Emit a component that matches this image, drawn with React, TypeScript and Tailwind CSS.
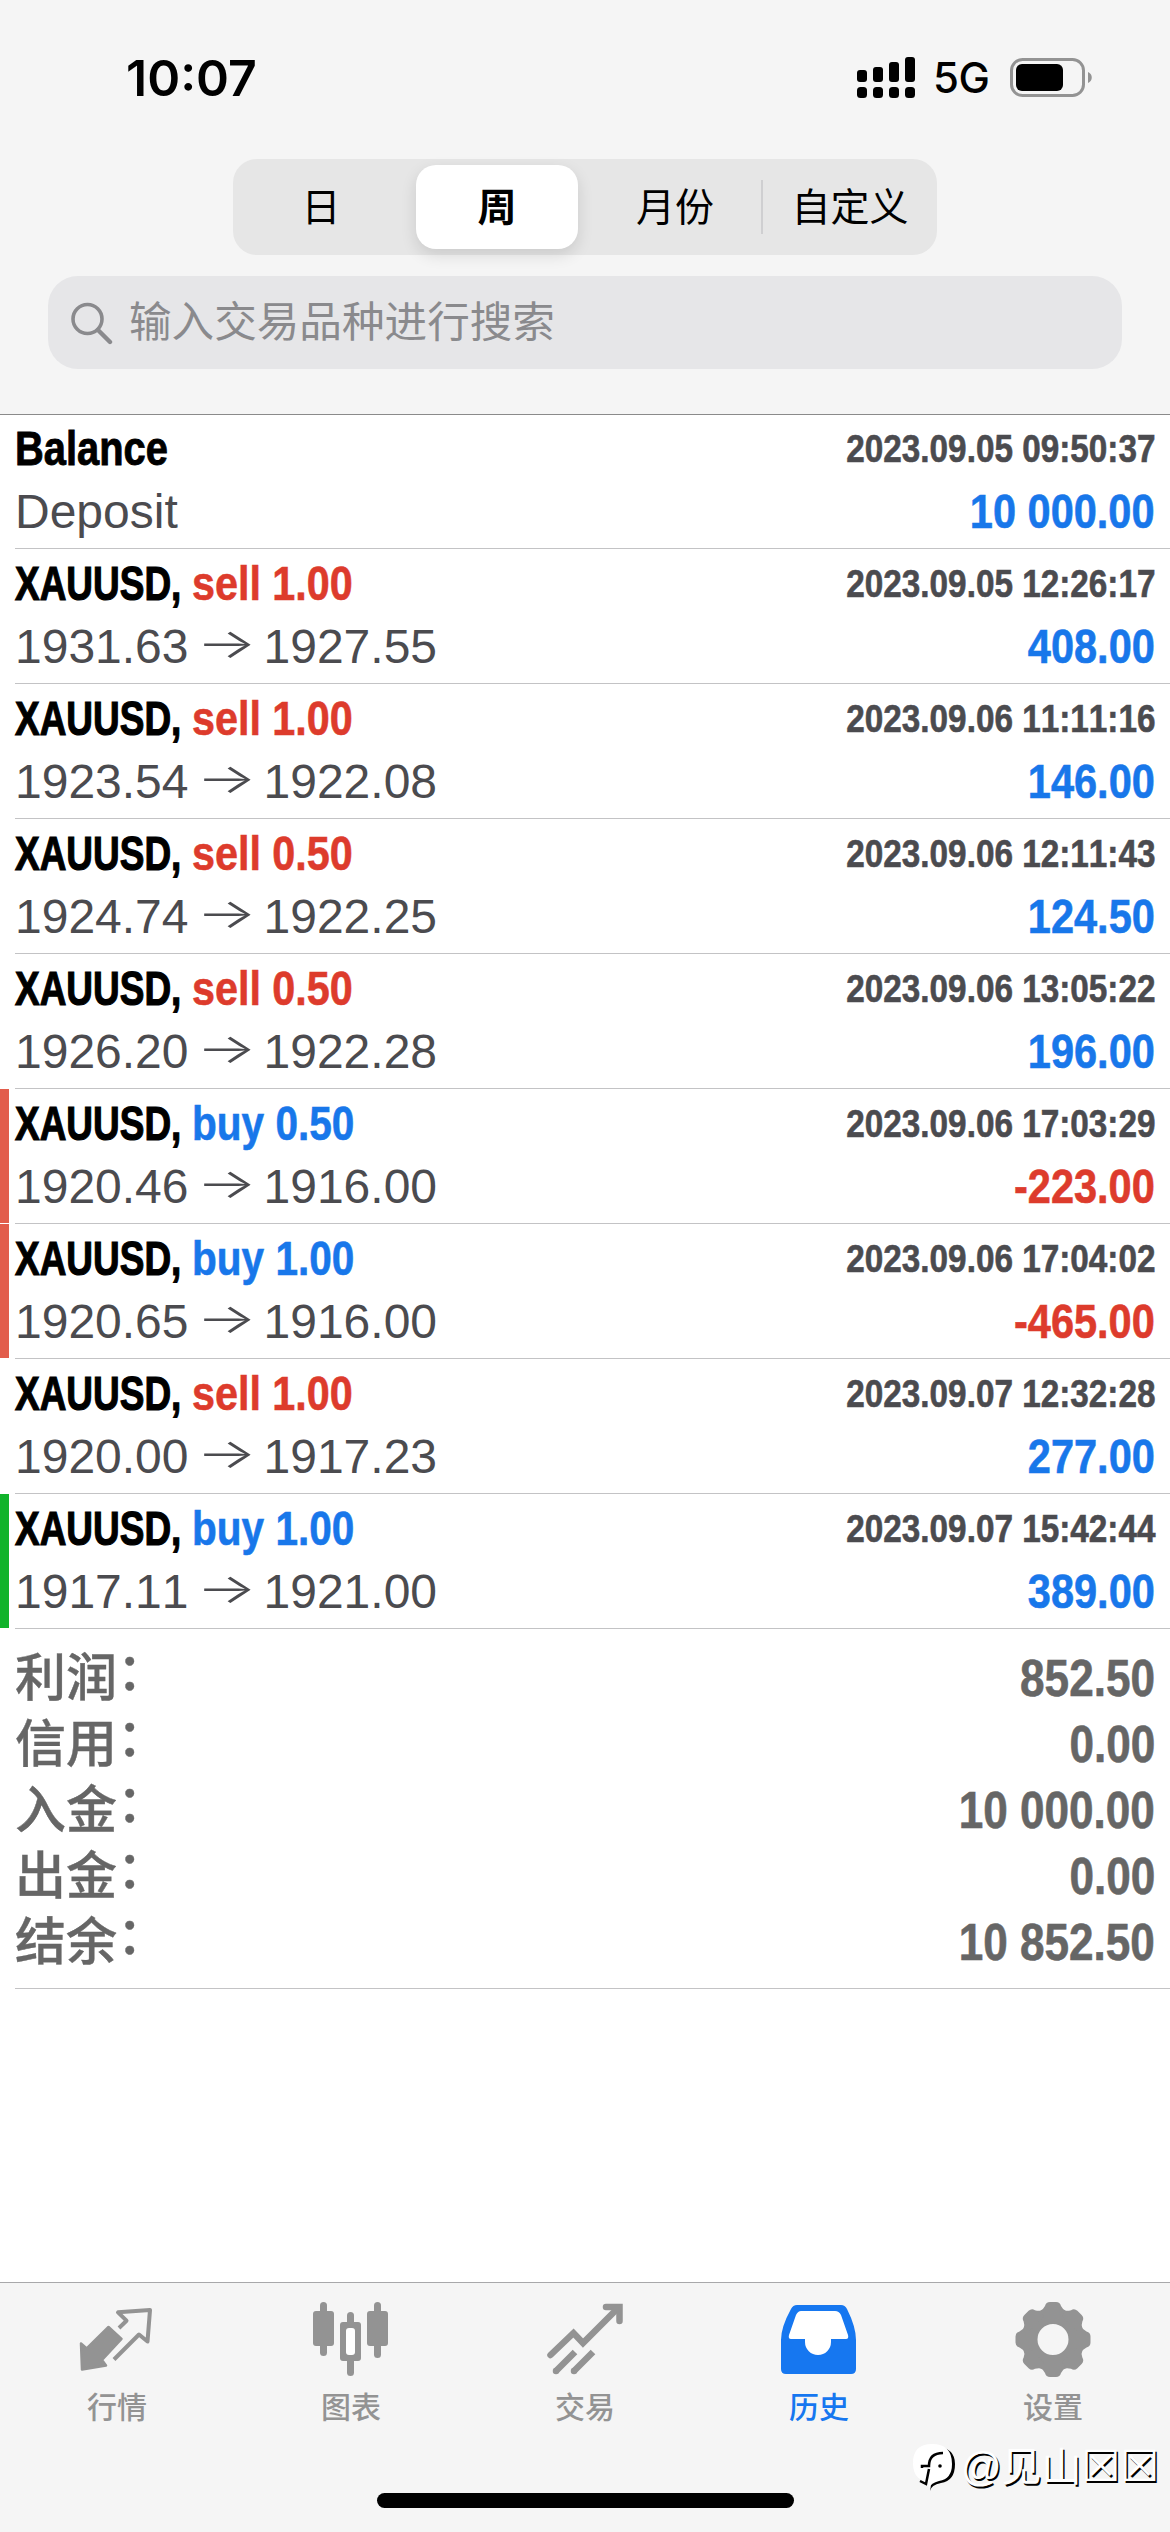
import { clsx } from "clsx";

const deals = [
  { kind: "sell", volume: "1.00", open: "1931.63", close: "1927.55", time: "2023.09.05 12:26:17", profit: "408.00" },
  { kind: "sell", volume: "1.00", open: "1923.54", close: "1922.08", time: "2023.09.06 11:11:16", profit: "146.00" },
  { kind: "sell", volume: "0.50", open: "1924.74", close: "1922.25", time: "2023.09.06 12:11:43", profit: "124.50" },
  { kind: "sell", volume: "0.50", open: "1926.20", close: "1922.28", time: "2023.09.06 13:05:22", profit: "196.00" },
  { kind: "buy", volume: "0.50", open: "1920.46", close: "1916.00", time: "2023.09.06 17:03:29", profit: "-223.00", mark: "sl" },
  { kind: "buy", volume: "1.00", open: "1920.65", close: "1916.00", time: "2023.09.06 17:04:02", profit: "-465.00", mark: "sl" },
  { kind: "sell", volume: "1.00", open: "1920.00", close: "1917.23", time: "2023.09.07 12:32:28", profit: "277.00" },
  { kind: "buy", volume: "1.00", open: "1917.11", close: "1921.00", time: "2023.09.07 15:42:44", profit: "389.00", mark: "tp" },
];

const summary = [
  { label: "利润", value: "852.50" },
  { label: "信用", value: "0.00" },
  { label: "入金", value: "10 000.00" },
  { label: "出金", value: "0.00" },
  { label: "结余", value: "10 852.50" },
];

const ranges = ["日", "周", "月份", "自定义"];

// bold figures squeezed to a condensed width
const condensed = "font-bold scale-x-[0.865] [-webkit-text-stroke:0.6px]";

function StatusBar() {
  return (
    <div className="flex h-[159px] items-start justify-between pr-[77px] pl-[126px]">
      <p className="mt-[48px] font-['Inter',sans-serif] text-[50px] leading-[60px] font-semibold text-black">
        10:07
      </p>
      <div className="mt-[53px] flex items-center">
        <svg className="h-[50px] w-[60px]" viewBox="0 0 60 50">
          <rect x="1" y="17" width="10" height="12" rx="3" />
          <rect x="17" y="14" width="10" height="15" rx="3" />
          <rect x="33" y="9" width="10" height="20" rx="3" />
          <rect x="49" y="4" width="10" height="25" rx="3" />
          <rect x="1" y="34" width="10" height="11" rx="3.5" />
          <rect x="17" y="34" width="10" height="11" rx="3.5" />
          <rect x="33" y="34" width="10" height="11" rx="3.5" />
          <rect x="49" y="34" width="10" height="11" rx="3.5" />
        </svg>
        <span className="ml-[17px] w-[76px] font-['Inter',sans-serif] text-[42px] leading-[50px] font-medium tracking-[-0.5px]">
          5G
        </span>
        <svg className="h-[50px] w-[84px]" viewBox="0 0 84 50">
          <rect x="2.5" y="6.5" width="72" height="36" rx="11" fill="none" stroke="#939393" strokeWidth="3" />
          <rect x="7" y="11" width="47" height="27" rx="6" />
          <path d="M79 19c5 2 5 9 0 11z" fill="#939393" />
        </svg>
      </div>
    </div>
  );
}

function Header() {
  return (
    <header className="h-[415px] border-b border-[#8a8a8a] bg-[#f5f5f5]">
      <StatusBar />
      <div className="mx-auto flex h-24 w-[704px] items-center rounded-[24px] bg-[#e6e6e6] text-[39px] leading-none">
        {ranges.map((r, i) => (
          <button
            key={r}
            className={clsx(
              "flex items-center justify-center",
              i === 1
                ? "mx-[7px] h-[84px] w-[162px] rounded-[20px] bg-white font-bold shadow-[0_6px_16px_rgba(0,0,0,0.12)]"
                : "h-[54px] w-[176px]",
              i === 2 && "pl-[4px]",
              i === 3 && "border-l-2 border-[#cfcfd1]",
            )}
          >
            {r}
          </button>
        ))}
      </div>
      <div className="mx-12 mt-[21px] flex h-[93px] items-center rounded-[30px] bg-[#e6e6e8] pl-[22px] text-[#8a8a8d]">
        <svg className="h-[44px] w-[44px]" viewBox="0 0 44 44" fill="none" stroke="currentColor" strokeLinecap="round">
          <circle cx="17.5" cy="18" r="14.5" strokeWidth="3.6" />
          <path d="M28 29l12 12" strokeWidth="4.4" />
        </svg>
        <span className="ml-[15px] text-[42.6px] leading-none">输入交易品种进行搜索</span>
      </div>
    </header>
  );
}

function Row({ title, detail, time, profit, mark }: {
  title: React.ReactNode;
  detail: React.ReactNode;
  time: string;
  profit: string;
  mark?: string;
}) {
  return (
    <li className="flex h-[135px] first:h-[134px]">
      <span className={clsx("mb-px w-[9px]", mark === "sl" && "bg-[#e25d4c]", mark === "tp" && "bg-[#11b32b]")} />
      <div className="ml-[6px] flex flex-1 flex-col justify-end border-b border-[#c3c3c5] pr-[15px] pb-[5px]">
        <div className="flex items-center justify-between">
          <p className="flex text-[48px] leading-[63px] text-black">{title}</p>
          <p className={clsx(condensed, "origin-right text-[38.5px] leading-[63px] text-[#4b4b4f]")}>{time}</p>
        </div>
        <div className="flex items-center justify-between">
          <p className="flex items-center text-[48px] leading-[63px] text-[#4b4b4f]">{detail}</p>
          <p
            className={clsx(
              condensed,
              "origin-right text-[48px] leading-[63px]",
              profit.startsWith("-") ? "text-[#dd3b2c]" : "text-[#1877ea]",
            )}
          >
            {profit}
          </p>
        </div>
      </div>
    </li>
  );
}

function History() {
  return (
    <main className="h-[1867px] bg-white">
      <ul className="[font-kerning:none]">
        <Row
          title={<span className="origin-left scale-x-[0.83] font-bold [-webkit-text-stroke:0.9px]">Balance</span>}
          detail="Deposit"
          time="2023.09.05 09:50:37"
          profit="10 000.00"
        />
        {deals.map((d) => (
          <Row
            key={d.time}
            title={
              <>
                <span className="w-[177px] origin-left scale-x-[0.77] font-bold [-webkit-text-stroke:1.2px]">
                  XAUUSD,
                </span>
                <span
                  className={clsx(
                    "origin-left font-bold [-webkit-text-stroke:0.6px]",
                    d.kind === "sell" ? "scale-x-[0.86] text-[#dd3b2c]" : "scale-x-[0.845] text-[#1877ea]",
                  )}
                >
                  {d.kind} {d.volume}
                </span>
              </>
            }
            detail={
              <>
                {d.open}
                <span className="w-[75px] -translate-y-[3px] scale-x-[1.55] text-center font-['Inter',sans-serif] text-[41px] font-light">
                  →
                </span>
                {d.close}
              </>
            }
            time={d.time}
            profit={d.profit}
            mark={d.mark}
          />
        ))}
      </ul>
      <dl className="ml-[15px] h-[360px] border-b border-[#c3c3c5] pt-[17px] pr-[15px] text-[#666]">
        {summary.map((s) => (
          <div key={s.label} className="flex h-[66px] items-center justify-between leading-[66px]">
            <dt className="text-[51px] font-medium [-webkit-text-stroke:0.4px]">
              {s.label}
              <span className="relative -top-[6px]">：</span>
            </dt>
            <dd className={clsx(condensed, "origin-right text-[51px]")}>{s.value}</dd>
          </div>
        ))}
      </dl>
    </main>
  );
}

function QuotesIcon() {
  return (
    <svg className="h-[78px] w-[78px]" viewBox="0 0 78 78" strokeLinejoin="round">
      <path
        d="M3 43.500l5.700 5L30.500 27 43.500 39 24 60l4 5.500L4 69.500z"
        fill="currentColor"
        stroke="currentColor"
        strokeWidth="2.500"
      />
      <path
        d="M41 28l7.500-7.300-8.500-8.400 32-2.300-2.500 31.500-8.500-7L36 59.500"
        fill="none"
        stroke="currentColor"
        strokeWidth="4"
      />
    </svg>
  );
}

function ChartIcon() {
  return (
    <svg className="h-[78px] w-[78px]" viewBox="0 0 78 78" fill="currentColor">
      <rect x="8" y="2" width="7" height="54" rx="3.5" />
      <rect x="1" y="11" width="21" height="35" rx="3" />
      <rect x="62" y="2" width="7" height="56" rx="3.5" />
      <rect x="55" y="11" width="21" height="35" rx="3" />
      <rect x="35" y="12" width="7" height="64" rx="3.5" />
      <rect x="28" y="22" width="21" height="39" rx="3" />
      <rect x="34" y="28" width="9" height="27" rx="3" fill="#fff" />
    </svg>
  );
}

function TradeIcon() {
  return (
    <svg className="h-[78px] w-[78px]" viewBox="0 0 78 78" fill="none" stroke="currentColor" strokeWidth="6.5">
      <path d="M4.500 55L27.500 33l9.500 10L72 8" strokeLinecap="round" />
      <path d="M60 7h13.500v14" strokeLinecap="round" />
      <path d="M10 71L29 52M28 71l19-19" />
      <g fill="currentColor" stroke="none">
        <circle cx="10" cy="71" r="3.250" />
        <circle cx="28" cy="71" r="3.250" />
      </g>
    </svg>
  );
}

function HistoryIcon() {
  return (
    <svg className="h-[78px] w-[78px]" viewBox="0 0 78 78">
      <path d="M17 5h44q4 0 6 4 9 18 9 31v29q0 5-5 5H6q-5 0-5-5V40Q1 27 11 9q2-4 6-4z" fill="currentColor" />
      <path d="M21 11h34q4 0 6 4l7 20q1 4-2 4H51v3a13 13 0 0 1-26 0v-3H11q-3 0-2-4l7-20q2-4 5-4z" fill="#fff" />
    </svg>
  );
}

function SettingsIcon() {
  const teeth = [0, 45, 90, 135, 180, 225, 270, 315];
  return (
    <svg className="h-[78px] w-[78px]" viewBox="0 0 78 78">
      <circle cx="39" cy="39.500" r="22.500" fill="none" stroke="currentColor" strokeWidth="14" />
      {teeth.map((a) => (
        <path
          key={a}
          d="M26 11q3-1 5-5 1-4 5-4h6q4 0 5 4 2 4 5 5l-4 6H30z"
          transform={`rotate(${a} 39 39.500)`}
          fill="currentColor"
        />
      ))}
    </svg>
  );
}

const tabs = [
  { label: "行情", icon: QuotesIcon },
  { label: "图表", icon: ChartIcon },
  { label: "交易", icon: TradeIcon },
  { label: "历史", icon: HistoryIcon },
  { label: "设置", icon: SettingsIcon },
];

function Watermark() {
  return (
    <div className="absolute top-[2439px] left-[912px] flex items-center text-white">
      <svg className="h-[54px] w-[46px]" viewBox="0 0 46 54">
        <path d="M24 7q19 2 19 18 0 17-14 19-10 2-11 8 1-5 1-8z" fill="#000" />
        <path d="M20 5q20 0 20 20 0 15-13 17-8 2-10 7l-1-6Q1 41 1 24 1 5 20 5z" fill="#fff" />
        <path d="M10 29v-2h7q0-13 14-13M17 30l-3 15-6-3" fill="none" stroke="#000" strokeWidth="2.500" />
        <circle cx="28" cy="27" r="1.800" />
      </svg>
      <span className="ml-[3px] text-[40px] leading-[52px] whitespace-nowrap [text-shadow:1.5px_1.5px_0_#000]">
        @见山<span className="font-['DejaVu_Sans'] text-[43px]">☒☒</span>
      </span>
    </div>
  );
}

export default function App() {
  return (
    <div className="relative h-[2532px] w-[1170px] overflow-hidden bg-white font-['Liberation_Sans','Noto_Sans_CJK_SC',sans-serif] text-black">
      <Header />
      <History />
      <footer className="h-[250px] border-t border-[#a8a8aa] bg-[#f5f5f5]">
        <nav className="grid h-[210px] grid-cols-5 pt-[17px]">
          {tabs.map(({ label, icon: Icon }) => (
            <a
              key={label}
              className={clsx("flex flex-col items-center", label === "历史" ? "text-[#1677f0]" : "text-[#939393]")}
            >
              <Icon />
              <span className="mt-[9px] text-[30px] leading-[42px] font-medium">{label}</span>
            </a>
          ))}
        </nav>
        <div className="mx-auto h-[15px] w-[417px] rounded-full bg-black" />
      </footer>
      <Watermark />
    </div>
  );
}
